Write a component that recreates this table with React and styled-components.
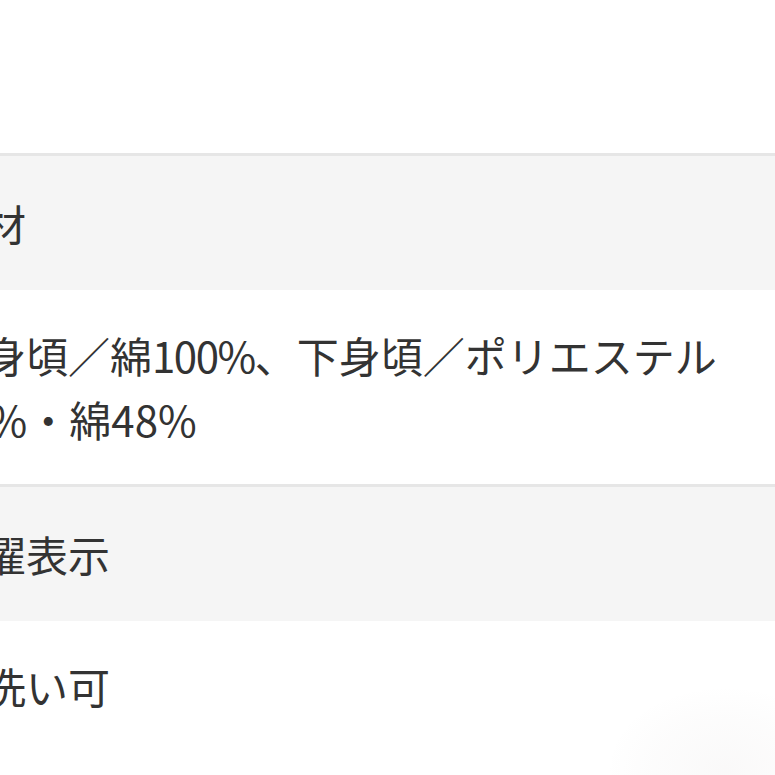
import React from "react";
import styled, { createGlobalStyle } from "styled-components";

const GlobalStyle = createGlobalStyle`
  html, body {
    margin: 0;
    padding: 0;
    background: #ffffff;
    overflow: hidden;
  }
  body {
    font-family: "Noto Sans CJK JP", "Noto Sans", sans-serif;
    color: #333333;
  }
`;

const Page = styled.div`
  position: relative;
  width: 775px;
  height: 775px;
  overflow: hidden;
  background: #ffffff;
  padding-top: 153px;
  box-sizing: border-box;
`;

const SpecList = styled.dl`
  margin: 0 0 0 -80px;
  width: calc(100% + 80px);
  box-sizing: border-box;
`;

const Label = styled.dt`
  margin: 0;
  background: #f5f5f5;
  border-top: 3px solid #e6e6e6;
  padding: 35px 40px 35px 22px;
  font-size: 42px;
  line-height: 64px;
  font-weight: 400;
  color: #333333;
`;

const Value = styled.dd`
  margin: 0;
  background: #ffffff;
  padding: 33px 40px 33px 22px;
  font-size: 42px;
  line-height: 64px;
  font-weight: 400;
  color: #333333;
`;

const Num = styled.span`
  letter-spacing: ${(p) => (p.$tight ? "-1.5px" : "0")};
`;

const CornerShade = styled.div`
  position: absolute;
  right: -70px;
  bottom: -80px;
  width: 240px;
  height: 170px;
  border-radius: 50%;
  background: radial-gradient(ellipse at center, rgba(130, 115, 115, 0.045) 0%, rgba(130, 115, 115, 0.02) 45%, rgba(255, 255, 255, 0) 70%);
  pointer-events: none;
`;

export default function App() {
  return (
    <>
      <GlobalStyle />
      <Page>
        <SpecList>
          <Label>素材</Label>
          <Value>
            上身頃／綿<Num $tight>100%</Num>、下身頃／ポリエステル<Num>52%</Num>・綿<Num>48%</Num>
          </Value>
          <Label>洗濯表示</Label>
          <Value>手洗い可</Value>
        </SpecList>
        <CornerShade />
      </Page>
    </>
  );
}
